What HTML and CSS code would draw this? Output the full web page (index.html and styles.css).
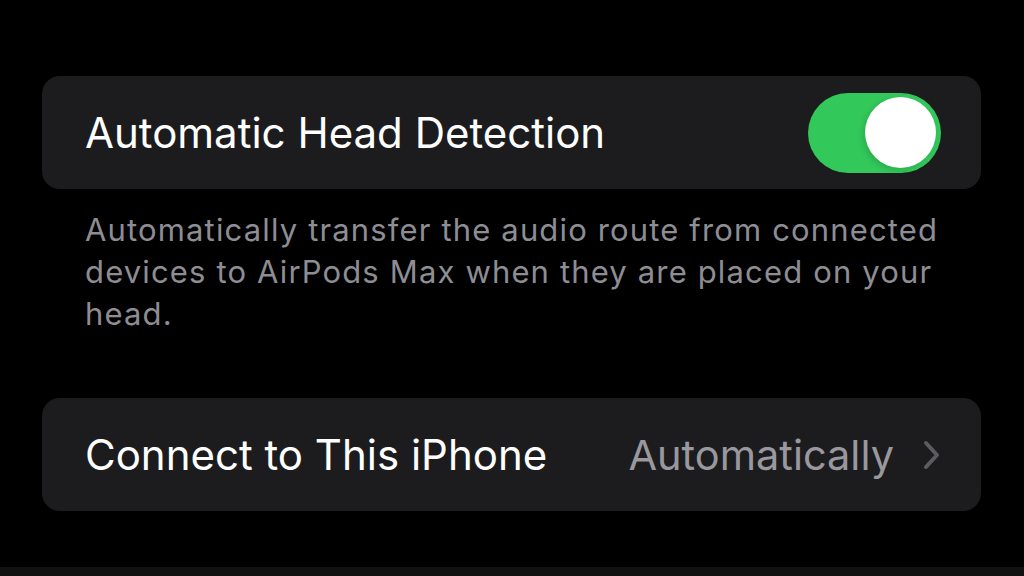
FILE: index.html
```html
<!DOCTYPE html>
<html lang="en">
<head>
    <meta charset="UTF-8">
    <meta name="viewport" content="width=device-width, initial-scale=1.0">
    <title>AirPods Max</title>
    <link rel="stylesheet" href="styles.css">
</head>
<body>
    <div class="settings">
        <div class="group">
            <div class="row">
                <span class="label">Automatic Head Detection</span>
                <div class="switch on">
                    <div class="knob"></div>
                </div>
            </div>
        </div>
        <p class="footer">Automatically transfer the audio route from connected devices to AirPods Max when they are placed on your head.</p>

        <div class="group">
            <div class="row">
                <span class="label">Connect to This iPhone</span>
                <div class="detail">
                    <span class="value">Automatically</span>
                    <svg class="chevron" width="20" height="30" viewBox="0 0 20 30">
                        <path d="M5 3 L16 15 L5 27" fill="none" stroke="#5b5b60" stroke-width="4" stroke-linecap="round" stroke-linejoin="round"/>
                    </svg>
                </div>
            </div>
        </div>
    </div>
    <div class="bottom-bar"></div>
</body>
</html>
```

FILE: styles.css
```css
body {
    margin: 0;
    height: 576px;
    background-color: #000;
    color: #fff;
    font-family: Inter, "Noto Sans", sans-serif;
    display: flex;
    flex-direction: column;
    overflow: hidden;
}
.settings {
    flex: 1;
    padding: 76px 43px 0 42px;
}
.group {
    background-color: #1c1c1e;
    border-radius: 18px;
}
.row {
    height: 113px;
    display: flex;
    align-items: center;
    justify-content: space-between;
    padding: 0 40px 0 43px;
}
.label {
    font-size: 42px;
}
.switch {
    width: 133px;
    height: 80px;
    border-radius: 40px;
    background-color: #39393d;
    display: flex;
    align-items: center;
    padding: 0 5px;
    box-sizing: border-box;
}
.switch.on {
    background-color: #32c85a;
    justify-content: flex-end;
}
.knob {
    width: 71px;
    height: 71px;
    border-radius: 50%;
    background-color: #fff;
    box-shadow: -2px 2px 6px rgba(0, 0, 0, 0.15);
}
.footer {
    margin: 0;
    padding: 20px 28px 0 43px;
    height: 209px;
    box-sizing: border-box;
    font-size: 31px;
    line-height: 42px;
    color: #8d8d93;
    letter-spacing: 1.15px;
}
.detail {
    display: flex;
    align-items: center;
    gap: 27px;
}
.value {
    font-size: 41.5px;
    color: #98989e;
}
.chevron {
    display: block;
}
.bottom-bar {
    height: 9px;
    background-color: #111;
}
```
